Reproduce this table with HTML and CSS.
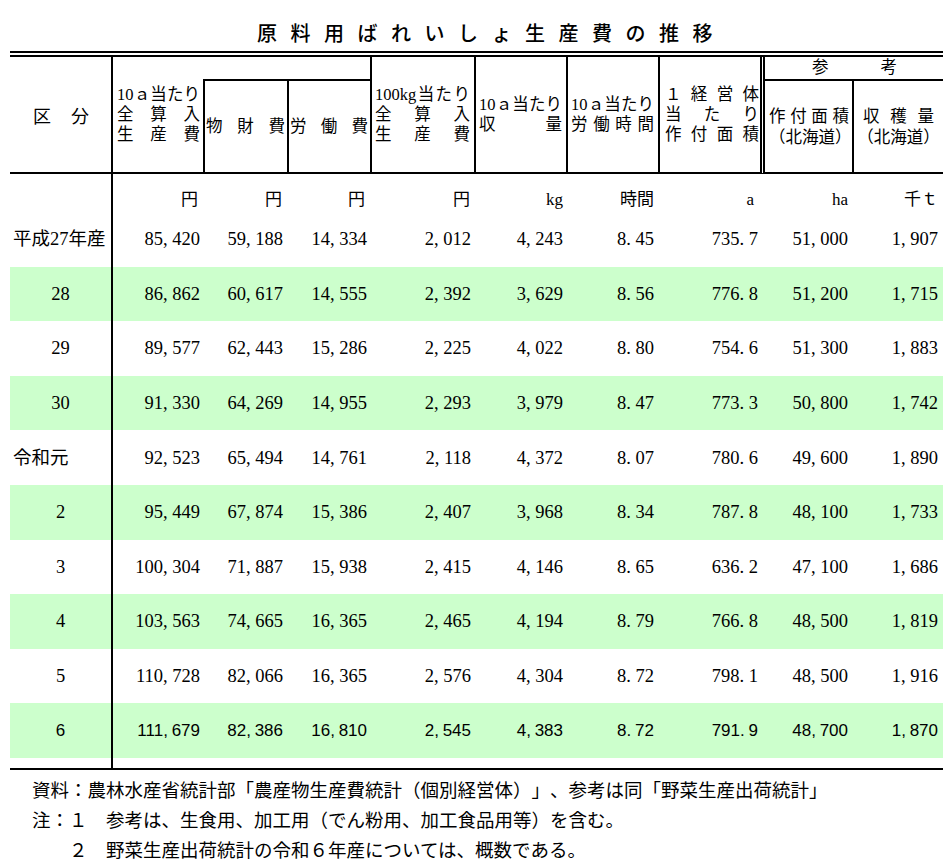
FILE: index.html
```html
<!DOCTYPE html>
<html lang="ja">
<head>
<meta charset="utf-8">
<title>原料用ばれいしょ生産費の推移</title>
<link rel="stylesheet" href="styles.css">
</head>
<body>
<h1 class="title">原料用ばれいしょ生産費の推移</h1>
<div class="sheet">
<table class="tbl">
<colgroup>
<col class="w0"><col class="w1"><col class="w2"><col class="w3"><col class="w4"><col class="w5"><col class="w6"><col class="w7"><col class="w8"><col class="w9">
</colgroup>
<thead>
<tr class="h1">
<th rowspan="2" class="kubun br bb"><div class="jl">区分</div></th>
<th rowspan="2" class="hc c1 bb"><div class="jl">10ａ当たり</div><div class="jl">全算入</div><div class="jl">生産費</div></th>
<th colspan="2" class="bb br"></th>
<th rowspan="2" class="hc c4 br bb"><div class="jl">100kg当たり</div><div class="jl">全算入</div><div class="jl">生産費</div></th>
<th rowspan="2" class="hc c5 br bb"><div class="jl">10ａ当たり</div><div class="jl">収量</div></th>
<th rowspan="2" class="hc c6 br bb"><div class="jl">10ａ当たり</div><div class="jl">労働時間</div></th>
<th rowspan="2" class="hc c7 bd bb"><div class="jl">１経営体</div><div class="jl">当たり</div><div class="jl">作付面積</div></th>
<th colspan="2" class="ref bb"><div class="jl">参考</div></th>
</tr>
<tr class="h2">
<th class="hc c2 bl br bb"><div class="jl">物財費</div></th>
<th class="hc c3 br bb"><div class="jl">労働費</div></th>
<th class="hc c8 br bb"><div class="jl">作付面積</div><div class="cn">（北海道）</div></th>
<th class="hc c9 bb"><div class="jl">収穫量</div><div class="cn">（北海道）</div></th>
</tr>
</thead>
<tbody>
<tr class="u">
<td></td><td>円</td><td>円</td><td>円</td><td>円</td><td>kg</td><td>時間</td><td>a</td><td>ha</td><td>千ｔ</td>
</tr>
<tr class="d">
<td class="k">平成27年産</td><td>85<span class="c">,</span>420</td><td>59<span class="c">,</span>188</td><td>14<span class="c">,</span>334</td><td>2<span class="c">,</span>012</td><td>4<span class="c">,</span>243</td><td>8<span class="c">.</span>45</td><td>735<span class="c">.</span>7</td><td>51<span class="c">,</span>000</td><td>1<span class="c">,</span>907</td>
</tr>
<tr class="d gr">
<td class="kc">28</td><td>86<span class="c">,</span>862</td><td>60<span class="c">,</span>617</td><td>14<span class="c">,</span>555</td><td>2<span class="c">,</span>392</td><td>3<span class="c">,</span>629</td><td>8<span class="c">.</span>56</td><td>776<span class="c">.</span>8</td><td>51<span class="c">,</span>200</td><td>1<span class="c">,</span>715</td>
</tr>
<tr class="d">
<td class="kc">29</td><td>89<span class="c">,</span>577</td><td>62<span class="c">,</span>443</td><td>15<span class="c">,</span>286</td><td>2<span class="c">,</span>225</td><td>4<span class="c">,</span>022</td><td>8<span class="c">.</span>80</td><td>754<span class="c">.</span>6</td><td>51<span class="c">,</span>300</td><td>1<span class="c">,</span>883</td>
</tr>
<tr class="d gr">
<td class="kc">30</td><td>91<span class="c">,</span>330</td><td>64<span class="c">,</span>269</td><td>14<span class="c">,</span>955</td><td>2<span class="c">,</span>293</td><td>3<span class="c">,</span>979</td><td>8<span class="c">.</span>47</td><td>773<span class="c">.</span>3</td><td>50<span class="c">,</span>800</td><td>1<span class="c">,</span>742</td>
</tr>
<tr class="d">
<td class="k">令和元</td><td>92<span class="c">,</span>523</td><td>65<span class="c">,</span>494</td><td>14<span class="c">,</span>761</td><td>2<span class="c">,</span>118</td><td>4<span class="c">,</span>372</td><td>8<span class="c">.</span>07</td><td>780<span class="c">.</span>6</td><td>49<span class="c">,</span>600</td><td>1<span class="c">,</span>890</td>
</tr>
<tr class="d gr">
<td class="kc">2</td><td>95<span class="c">,</span>449</td><td>67<span class="c">,</span>874</td><td>15<span class="c">,</span>386</td><td>2<span class="c">,</span>407</td><td>3<span class="c">,</span>968</td><td>8<span class="c">.</span>34</td><td>787<span class="c">.</span>8</td><td>48<span class="c">,</span>100</td><td>1<span class="c">,</span>733</td>
</tr>
<tr class="d">
<td class="kc">3</td><td>100<span class="c">,</span>304</td><td>71<span class="c">,</span>887</td><td>15<span class="c">,</span>938</td><td>2<span class="c">,</span>415</td><td>4<span class="c">,</span>146</td><td>8<span class="c">.</span>65</td><td>636<span class="c">.</span>2</td><td>47<span class="c">,</span>100</td><td>1<span class="c">,</span>686</td>
</tr>
<tr class="d gr">
<td class="kc">4</td><td>103<span class="c">,</span>563</td><td>74<span class="c">,</span>665</td><td>16<span class="c">,</span>365</td><td>2<span class="c">,</span>465</td><td>4<span class="c">,</span>194</td><td>8<span class="c">.</span>79</td><td>766<span class="c">.</span>8</td><td>48<span class="c">,</span>500</td><td>1<span class="c">,</span>819</td>
</tr>
<tr class="d">
<td class="kc">5</td><td>110<span class="c">,</span>728</td><td>82<span class="c">,</span>066</td><td>16<span class="c">,</span>365</td><td>2<span class="c">,</span>576</td><td>4<span class="c">,</span>304</td><td>8<span class="c">.</span>72</td><td>798<span class="c">.</span>1</td><td>48<span class="c">,</span>500</td><td>1<span class="c">,</span>916</td>
</tr>
<tr class="d gr g">
<td class="kc">6</td><td>111<span class="c">,</span>679</td><td>82<span class="c">,</span>386</td><td>16<span class="c">,</span>810</td><td>2<span class="c">,</span>545</td><td>4<span class="c">,</span>383</td><td>8<span class="c">.</span>72</td><td>791<span class="c">.</span>9</td><td>48<span class="c">,</span>700</td><td>1<span class="c">,</span>870</td>
</tr>
<tr class="sp">
<td></td><td></td><td></td><td></td><td></td><td></td><td></td><td></td><td></td><td></td>
</tr>
</tbody>
</table>
</div>
<div class="notes">
<p>資料：農林水産省統計部「農産物生産費統計（個別経営体）」、参考は同「野菜生産出荷統計」</p>
<p>注：１　参考は、生食用、加工用（でん粉用、加工食品用等）を含む。</p>
<p>　　２　野菜生産出荷統計の令和６年産については、概数である。</p>
</div>
</body>
</html>
```

FILE: styles.css
```css
html, body {
  margin: 0;
  padding: 0;
  background: #fff;
}
body {
  color: #000;
  font-family: "Noto Sans CJK JP", sans-serif;
}
.title {
  margin: 0;
  box-sizing: border-box;
  height: 51px;
  padding: 21px 0 0 34px;
  font-size: 20px;
  line-height: 24px;
  font-weight: 500;
  letter-spacing: 13.5px;
  text-align: center;
  font-family: "Noto Sans CJK JP", sans-serif;
}
.sheet {
  margin-left: 10px;
  width: 933px;
  border-top: 6px double #000;
}
.tbl {
  width: 933px;
  table-layout: fixed;
  border-collapse: separate;
  border-spacing: 0;
}
.w0 { width: 103px; }
.w1 { width: 90px; }
.w2 { width: 86px; }
.w3 { width: 83px; }
.w4 { width: 104px; }
.w5 { width: 92px; }
.w6 { width: 92px; }
.w7 { width: 105px; }
.w8 { width: 89px; }
.w9 { width: 89px; }

th {
  font-weight: normal;
  padding: 0;
  vertical-align: middle;
  font-family: "Liberation Serif", "Noto Sans CJK JP", serif;
  font-size: 16.5px;
  line-height: 20px;
}
.bb { border-bottom: 2px solid #000; }
.br { border-right: 2px solid #000; }
.bl { border-left: 2px solid #000; }
.bd { border-right: 5px double #000; }

.h1 { height: 24px; }
.h2 { height: 93px; }

.jl {
  text-align: justify;
  text-align-last: justify;
}
.cn {
  text-align: center;
}
.kubun {
  padding: 0 22px 0 23px;
  font-family: "Noto Sans CJK JP", sans-serif;
  font-size: 18px;
}
.c1 { padding: 0 3px 0 4px; }
.c2 { padding: 0 2px 0 1px; }
.c3 { padding: 0 2px 0 1px; }
.c4 { padding: 0 4px 0 3px; }
.c5 { padding: 0 4px 0 3px; }
.c6 { padding: 0 4px 0 3px; }
.c7 { padding: 0 1px 0 5px; }
.c8 { padding: 0 3px 0 4px; line-height: 21px; }
.c9 { padding: 0 9px 0 9px; line-height: 21px; }
.c9 .cn { margin: 0 -7px; }
.ref {
  padding: 0 46px 0 47px;
}

td {
  padding: 0;
  font-family: "Liberation Serif", "Noto Sans CJK JP", serif;
  font-size: 18.5px;
  line-height: 20px;
  text-align: right;
  vertical-align: middle;
  white-space: nowrap;
}
tbody td:first-child {
  border-right: 2px solid #000;
}
.c {
  display: inline-block;
  width: 0.5em;
  text-align: left;
}

.u { height: 38px; }
.u td {
  vertical-align: bottom;
  padding-bottom: 2px;
  font-size: 17px;
}
.u td:nth-child(2) { padding-right: 5px; }
.u td:nth-child(3) { padding-right: 7px; }
.u td:nth-child(4) { padding-right: 7px; }
.u td:nth-child(5) { padding-right: 6px; }
.u td:nth-child(6) { padding-right: 5px; }
.u td:nth-child(7) { padding-right: 6px; }
.u td:nth-child(8) { padding-right: 11px; }
.u td:nth-child(9) { padding-right: 6px; }
.u td:nth-child(10) { padding-right: 5px; }

.d { height: 54.6px; }
.d.gr td { background: #ccffcc; }
.d td:nth-child(2) { padding-right: 3px; }
.d td:nth-child(3) { padding-right: 6px; }
.d td:nth-child(4) { padding-right: 5px; }
.d td:nth-child(5) { padding-right: 5px; }
.d td:nth-child(6) { padding-right: 5px; }
.d td:nth-child(7) { padding-right: 6px; }
.d td:nth-child(8) { padding-right: 7px; }
.d td:nth-child(9) { padding-right: 6px; }
.d td:nth-child(10) { padding-right: 5px; }
.d td.k {
  text-align: left;
  padding-left: 3px;
}
.d td.kc {
  text-align: center;
}
.d.g td {
  font-family: "Liberation Sans", "Noto Sans CJK JP", sans-serif;
  font-size: 17px;
}

.sp td {
  height: 10px;
  border-bottom: 2px solid #000;
}

.notes {
  padding: 4px 0 0 32px;
  font-family: "Noto Sans CJK JP", sans-serif;
  font-size: 18.5px;
  line-height: 30px;
  text-spacing-trim: space-all;
}
.notes p {
  margin: 0;
  white-space: pre;
}
```
